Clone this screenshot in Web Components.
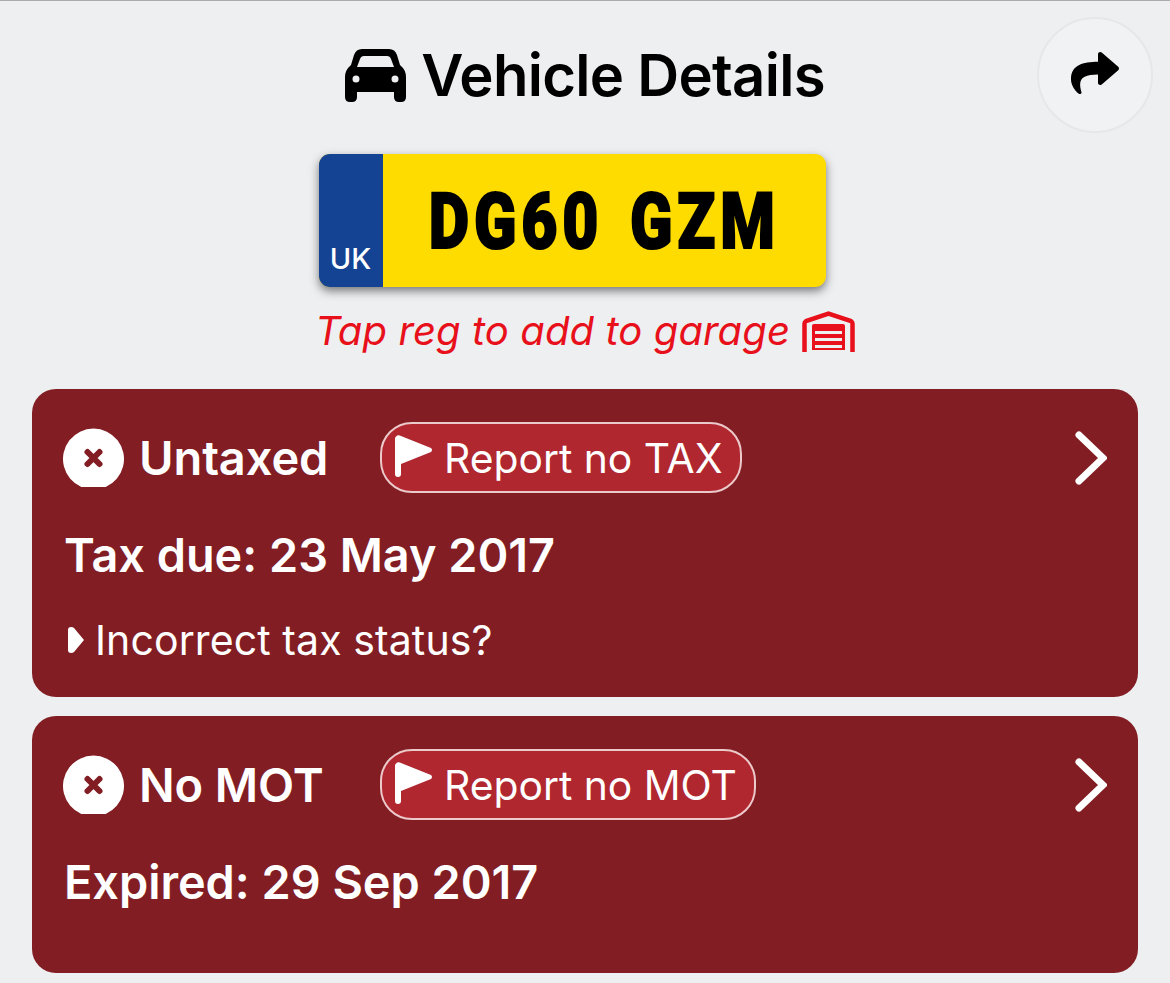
<!DOCTYPE html>
<html lang="en">
<head>
<meta charset="utf-8">
<title>Vehicle Details</title>
<style>
  html, body { margin: 0; padding: 0; }
  body {
    width: 1170px;
    height: 983px;
    overflow: hidden;
    background: #edeff1;
    border-top: 1px solid #a9abae;
    box-sizing: border-box;
    font-family: "Inter", "Liberation Sans", sans-serif;
  }
</style>
</head>
<body>
  <vehicle-page>
    <vehicle-header>Vehicle Details</vehicle-header>
    <reg-plate>DG60 GZM</reg-plate>
    <garage-hint>Tap reg to add to garage</garage-hint>
    <status-card label="Untaxed" action="Report no TAX" due="Tax due: 23 May 2017">
      <status-toggle>Incorrect tax status?</status-toggle>
    </status-card>
    <status-card label="No MOT" action="Report no MOT" due="Expired: 29 Sep 2017" style="--card-bottom: 66px"></status-card>
  </vehicle-page>

<script>
  class VehiclePage extends HTMLElement {
    constructor() {
      super();
      this.attachShadow({ mode: "open" });
    }

    connectedCallback() {
      this.shadowRoot.innerHTML = `
        <style>
          :host { display: flex; flex-direction: column; }
        </style>
        <slot></slot>
      `;
    }
  }

  class VehicleHeader extends HTMLElement {
    constructor() {
      super();
      this.attachShadow({ mode: "open" });
    }

    connectedCallback() {
      this.shadowRoot.innerHTML = `
        <style>
          :host {
            display: grid;
            grid-template-columns: 1fr auto 1fr;
            align-items: center;
            padding-top: 16px;
            height: 116px;
          }
          h1 {
            grid-column: 2;
            display: flex;
            align-items: center;
            gap: 15px;
            margin: 0;
            font: 600 58px/60px "Inter", "Liberation Sans", sans-serif;
            letter-spacing: -0.7px;
            color: #000;
            white-space: nowrap;
          }
          .car { width: 61px; height: 53px; flex: none; }
          button {
            grid-column: 3;
            justify-self: end;
            margin-right: 17px;
            width: 116px;
            height: 116px;
            padding: 0;
            border-radius: 50%;
            border: 2px solid #e6e7e9;
            background: #f1f2f3;
            display: flex;
            align-items: center;
            justify-content: center;
          }
          button svg { width: 48px; height: 48px; margin-top: -4px; }
        </style>
        <h1>
          <svg class="car" viewBox="0 0 61 53">
            <path fill="#000" fill-rule="evenodd" d="M17 0H44Q50 0 52 6L55 16Q61 21 61 28V48Q61 53 56 53H54Q49 53 49 48V43H12V48Q12 53 7 53H5Q0 53 0 48V28Q0 21 6 16L9 6Q11 0 17 0ZM19 7Q16 7 15 10L12 18H49L46 10Q45 7 42 7ZM11 26.500A3.500 3.500 0 1 0 11 33.500A3.500 3.500 0 1 0 11 26.500ZM50 26.500A3.500 3.500 0 1 0 50 33.500A3.500 3.500 0 1 0 50 26.500Z"/>
          </svg>
          <slot></slot>
        </h1>
        <button aria-label="Share">
          <svg viewBox="0 0 512 512">
            <path fill="#000" d="M503.691 189.836L327.687 37.851C312.281 24.546 288 35.347 288 56.015v80.053C127.371 137.907 0 170.1 0 322.326c0 61.441 39.581 122.309 83.333 154.132 13.653 9.931 33.111-2.533 28.077-18.631C66.066 312.814 132.917 274.316 288 272.085V360c0 20.7 24.3 31.453 39.687 18.164l176.004-152c11.071-9.562 11.086-26.753 0-36.328z"/>
          </svg>
        </button>
      `;
    }
  }

  class RegPlate extends HTMLElement {
    constructor() {
      super();
      this.attachShadow({ mode: "open" });
    }

    connectedCallback() {
      this.shadowRoot.innerHTML = `
        <style>
          :host {
            display: flex;
            align-self: center;
            width: 507px;
            height: 133px;
            margin: 21px 26px 0 0;
            border-radius: 11px;
            overflow: hidden;
            box-shadow: 0 4px 10px rgba(0, 0, 0, 0.5);
            background: #ffdc00;
          }
          .band {
            flex: none;
            width: 64px;
            background: #134392;
            color: #fff;
            display: flex;
            align-items: flex-end;
            justify-content: center;
            padding-bottom: 11px;
            box-sizing: border-box;
            font: 500 29px/34px "Inter", "Liberation Sans", sans-serif;
          }
          .reg {
            flex: 1;
            min-width: 0;
            display: flex;
            align-items: center;
            justify-content: center;
            padding-top: 3px;
            box-sizing: border-box;
            color: #000;
            font: 900 78px/130px "Roboto", "Liberation Sans", sans-serif;
            white-space: nowrap;
          }
          /* narrow the glyphs, the plate font is a condensed one */
          .reg span {
            display: inline-block;
            flex: none;
            letter-spacing: 6px;
            word-spacing: 8px;
            -webkit-text-stroke: 2px #000;
            transform: scaleX(0.8);
          }
        </style>
        <div class="band">UK</div>
        <div class="reg"><span><slot></slot></span></div>
      `;
    }
  }

  class GarageHint extends HTMLElement {
    constructor() {
      super();
      this.attachShadow({ mode: "open" });
    }

    connectedCallback() {
      this.shadowRoot.innerHTML = `
        <style>
          :host {
            display: flex;
            align-self: center;
            align-items: center;
            gap: 12px;
            height: 50px;
            margin: 19px 0 33px;
            color: #e8101a;
            font: italic 400 40px/50px "Inter", "Liberation Sans", sans-serif;
            letter-spacing: 0.1px;
            white-space: nowrap;
          }
          svg { width: 53px; height: 41px; flex: none; }
        </style>
        <span><slot></slot></span>
        <svg viewBox="0 0 53 41">
          <path fill="none" stroke="#e8101a" stroke-width="4.500" d="M2.500 41V12.500Q2.500 11 4 10L26.500 2.500L49 10Q50.500 11 50.500 12.500V41"/>
          <path fill="#e8101a" fill-rule="evenodd" d="M10 15Q10 13 12 13H41Q43 13 43 15V39H10ZM13 20V23H40V20ZM13 27V30H40V27ZM13 34V37H40V34Z"/>
        </svg>
      `;
    }
  }

  class StatusCard extends HTMLElement {
    constructor() {
      super();
      this.attachShadow({ mode: "open" });
    }

    connectedCallback() {
      const label = this.getAttribute("label");
      const action = this.getAttribute("action");
      const due = this.getAttribute("due");

      this.shadowRoot.innerHTML = `
        <style>
          :host {
            display: block;
            margin: 0 32px 19px;
            padding: 33px 31px var(--card-bottom, 35px) 31px;
            border-radius: 24px;
            background: #821e23;
            color: #fff;
          }
          .top { display: flex; align-items: center; height: 71px; }
          .cross { width: 61px; height: 60px; flex: none; }
          .label {
            width: 241px;
            margin-left: 15px;
            font: 600 47px/50px "Inter", "Liberation Sans", sans-serif;
            letter-spacing: -0.1px;
          }
          .pill {
            display: flex;
            align-items: center;
            gap: 11px;
            height: 71px;
            box-sizing: border-box;
            padding: 0 17px 0 13px;
            border: 2px solid #ecc9ca;
            border-radius: 32px;
            background: #b0272f;
            font: 400 40.800px/50px "Inter", "Liberation Sans", sans-serif;
            white-space: nowrap;
          }
          .flag { width: 38px; height: 42px; flex: none; margin-top: -3px; }
          .chevron { width: 32px; height: 54px; margin-left: auto; flex: none; }
          .due {
            margin: 37px 0 0 1px;
            font: 600 46.800px/50px "Inter", "Liberation Sans", sans-serif;
          }
        </style>
        <div class="top">
          <svg class="cross" viewBox="0 0 61 60">
            <path fill="#fff" d="M18.300 59A30.500 30.500 0 1 1 42.700 59Z"/>
            <path fill="none" stroke="#821e23" stroke-width="6" stroke-linecap="round" d="M24.500 24L36.500 36M36.500 24L24.500 36"/>
          </svg>
          <span class="label">${label}</span>
          <span class="pill">
            <svg class="flag" viewBox="0 0 38 42">
              <path fill="#fff" d="M1 1.500Q3 -0.500 6 1L36 13Q38 15 36 17L6 29V39Q6 42 3 42Q0 42 0 39V3Z"/>
            </svg>
            ${action}
          </span>
          <svg class="chevron" viewBox="0 0 32 54">
            <path fill="none" stroke="#fff" stroke-width="7" stroke-linecap="round" stroke-linejoin="miter" d="M4 4L28 27L4 50"/>
          </svg>
        </div>
        <div class="due">${due}</div>
        <slot></slot>
      `;
    }
  }

  class StatusToggle extends HTMLElement {
    constructor() {
      super();
      this.attachShadow({ mode: "open" });
    }

    connectedCallback() {
      this.shadowRoot.innerHTML = `
        <style>
          :host {
            display: flex;
            align-items: center;
            gap: 11px;
            height: 44px;
            margin: 38px 0 0 5px;
            font: 400 41px/44px "Inter", "Liberation Sans", sans-serif;
            letter-spacing: 0.1px;
            white-space: nowrap;
          }
          svg { width: 16px; height: 26px; flex: none; }
        </style>
        <svg viewBox="0 0 16 26">
          <path fill="#fff" d="M0 3Q0 0 3 0Q5 0 6 1L16 13L6 25Q5 26 3 26Q0 26 0 23Z"/>
        </svg>
        <span><slot></slot></span>
      `;
    }
  }

  customElements.define("vehicle-page", VehiclePage);
  customElements.define("vehicle-header", VehicleHeader);
  customElements.define("reg-plate", RegPlate);
  customElements.define("garage-hint", GarageHint);
  customElements.define("status-card", StatusCard);
  customElements.define("status-toggle", StatusToggle);
</script>
</body>
</html>
